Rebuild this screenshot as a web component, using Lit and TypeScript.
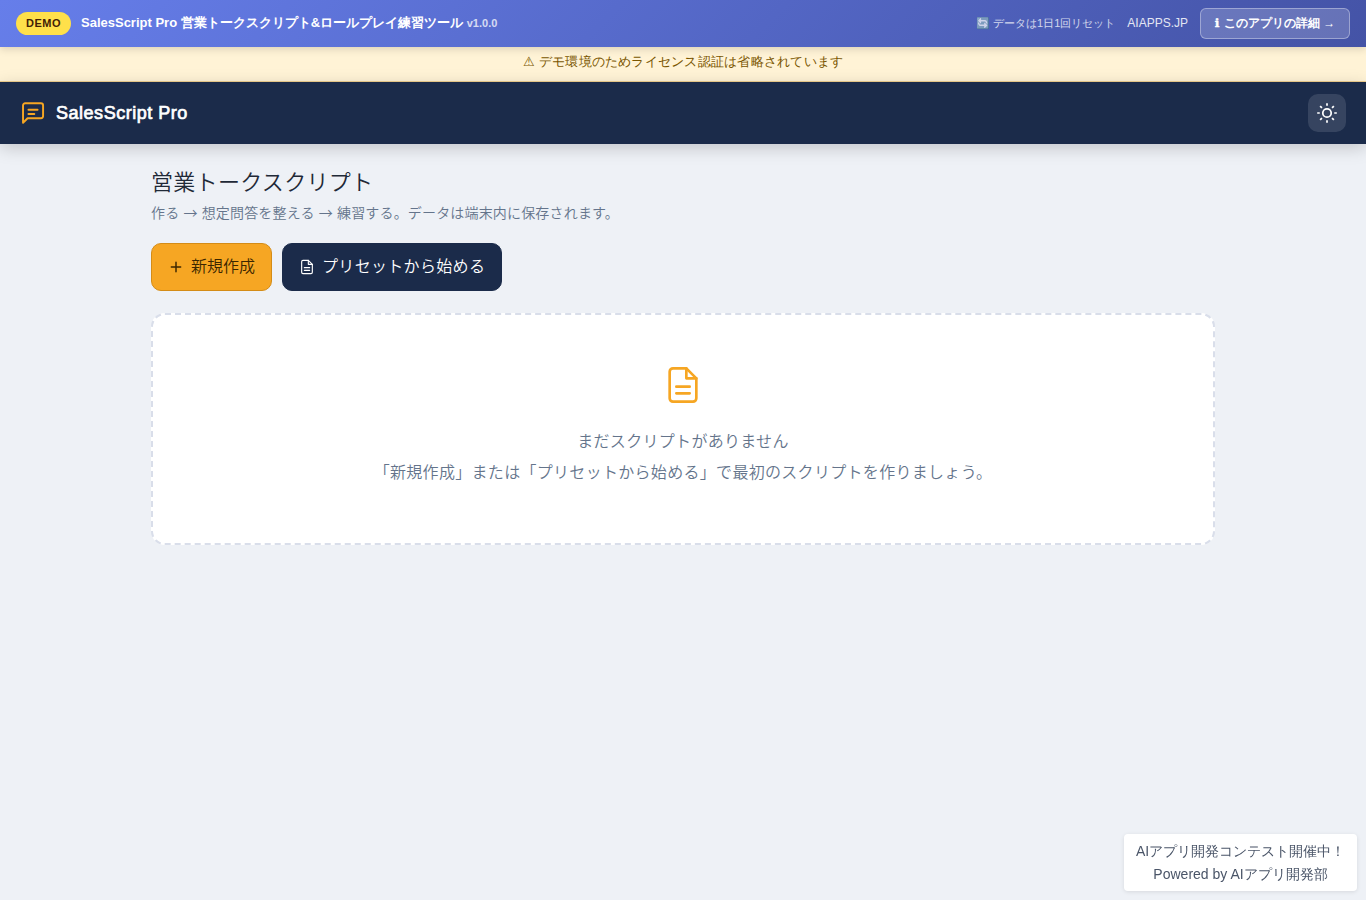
import { LitElement, html, css, svg } from "lit";
import { customElement } from "lit/decorators.js";

const doc = svg`<path d="M14 2H6a2 2 0 0 0-2 2v16a2 2 0 0 0 2 2h12a2 2 0 0 0 2-2V8z"/><path d="M14 2v6h6"/><path d="M8 13h8M8 17h8"/>`;

@customElement("app-root")
export class AppRoot extends LitElement {
  static styles = css`
    :host { display: block; min-height: 900px; background: #eef1f6; color: #1f2937; font-family: "Liberation Sans", sans-serif; font-size: 16px; line-height: 1.7; }
    * { box-sizing: border-box; }
    svg { fill: none; stroke: currentColor; stroke-width: 1.6; stroke-linecap: round; stroke-linejoin: round; flex: none; display: block; }
    .demo { position: relative; z-index: 3; height: 47px; padding: 0 16px; display: flex; align-items: center; justify-content: space-between; background: linear-gradient(135deg, #667eea 0%, #4453a6 100%); color: #fff; box-shadow: 0 2px 8px rgba(0,0,0,.15); line-height: 1.4; }
    .left { display: flex; align-items: center; gap: 10px; }
    .right { display: flex; align-items: center; gap: 12px; }
    .badge { height: 23px; padding: 0 10px; border-radius: 12px; background: #ffe04a; color: #422006; font-size: 11px; font-weight: 700; letter-spacing: .5px; line-height: 23px; }
    .name { font-size: 13px; font-weight: 700; }
    .ver { font-size: 11px; opacity: .75; }
    .reset { font-size: 11px; opacity: .75; }
    .site { font-size: 12px; opacity: .85; }
    .detail { width: 150px; height: 31px; padding: 0 14px; border: 1px solid rgba(255,255,255,.35); border-radius: 6px; background: rgba(255,255,255,.18); font-size: 12px; font-weight: 700; line-height: 29px; white-space: nowrap; }
    .info { display: inline-block; width: 5.5px; line-height: 1; font-family: "DejaVu Sans", sans-serif; -webkit-text-stroke: .4px #fff; }
    .notice { height: 35px; padding-top: 4px; background: #fff3d6; border-bottom: 1px solid #f0d090; color: #7a5600; text-align: center; font-size: 13px; line-height: 22px; letter-spacing: .018em; }
    .header { position: relative; z-index: 2; height: 62px; padding: 0 20px; display: flex; align-items: center; justify-content: space-between; background: #1b2b4a; color: #fff; box-shadow: 0 4px 16px rgba(0,0,0,.18); }
    .brand { display: flex; align-items: center; gap: 10px; font-size: 18px; letter-spacing: .52px; }
    .brand span { -webkit-text-stroke: .7px #fff; }
    .brand svg { color: #f6a623; stroke-width: 1.8; }
    .theme { width: 38px; height: 38px; border-radius: 10px; background: rgba(255,255,255,.12); display: grid; place-items: center; }
    .theme svg { stroke-width: 1.9; stroke-linecap: butt; }
    main { width: 1064px; margin: 0 auto; padding-top: 18px; font-family: "Noto Sans CJK JP", sans-serif; font-weight: 350; }
    h1 { margin: 0; font-size: 22px; font-weight: 350; line-height: 37px; letter-spacing: .3px; }
    .sub { margin: 0; padding-top: 1px; font-size: 14px; color: #64748b; line-height: 24px; letter-spacing: .17px; word-spacing: .8px; }
    .actions { display: flex; gap: 10px; margin-top: 19px; }
    .btn { height: 48px; padding: 0 16px 3px; display: flex; align-items: center; gap: 7px; border: 1px solid #1b2b4a; border-radius: 10px; background: #1b2b4a; color: #fff; letter-spacing: .02em; }
    .btn svg { position: relative; top: 1.5px; stroke-width: 1.7; }
    .btn.primary { background: #f6a623; border-color: #d48c17; color: #3b2600; letter-spacing: 0; }
    .btn.primary svg { stroke-width: 2.2; }
    .empty { margin-top: 22px; height: 232px; padding-top: 50px; border: 2px dashed #d9deea; border-radius: 14px; background: #fff; color: #64748b; text-align: center; display: flex; flex-direction: column; align-items: center; }
    .empty svg { color: #f6a623; margin-bottom: 20px; }
    .empty p { margin: 0; line-height: 31px; letter-spacing: .019em; }
    .credit { position: fixed; right: 9px; bottom: 9px; width: 233px; height: 57px; padding-top: 6px; border-radius: 4px; background: #fff; box-shadow: 0 1px 4px rgba(0,0,0,.1); color: #4a5568; font-size: 14px; line-height: 23px; text-align: center; }
  `;
  render() {
    return html`
      <div class="demo" lang="ja">
        <div class="left"><span class="badge">DEMO</span><span class="name">SalesScript Pro 営業トークスクリプト&amp;ロールプレイ練習ツール <span class="ver">v1.0.0</span></span></div>
        <div class="right"><span class="reset">🔄 データは1日1回リセット</span><span class="site">AIAPPS.JP</span><span class="detail"><span class="info">ℹ</span> このアプリの詳細 →</span></div>
      </div>
      <div class="notice" lang="ja">⚠ デモ環境のためライセンス認証は省略されています</div>
      <header class="header" lang="ja">
        <div class="brand"><svg width="26" height="26" viewBox="0 0 24 24"><path d="M21.3 14.8a2 2 0 0 1-2 2H7l-4.2 4.2V5a2 2 0 0 1 2-2h14.5a2 2 0 0 1 2 2z"/><path d="M7.8 9h8.4M7.8 13h5.4"/></svg><span>SalesScript Pro</span></div>
        <div class="theme"><svg width="22" height="22" viewBox="0 0 24 24"><circle cx="12" cy="12" r="4.6"/><path d="M12 1.3v2.8M12 19.9v2.8M1.3 12h2.8M19.9 12h2.8M4.5 4.5l2 2M17.5 17.5l2 2M4.5 19.5l2-2M17.5 6.5l2-2"/></svg></div>
      </header>
      <main lang="ja">
        <h1>営業トークスクリプト</h1>
        <p class="sub">作る → 想定問答を整える → 練習する。データは端末内に保存されます。</p>
        <div class="actions">
          <div class="btn primary"><svg width="16" height="16" viewBox="0 0 24 24"><path d="M12 5v14M5 12h14"/></svg>新規作成</div>
          <div class="btn"><svg width="16" height="16" viewBox="0 0 24 24">${doc}</svg>プリセットから始める</div>
        </div>
        <section class="empty"><svg width="40" height="40" viewBox="0 0 24 24">${doc}</svg><p>まだスクリプトがありません</p><p>「新規作成」または「プリセットから始める」で最初のスクリプトを作りましょう。</p></section>
      </main>
      <div class="credit" lang="ja">AIアプリ開発コンテスト開催中！<br>Powered by AIアプリ開発部</div>
    `;
  }
}
